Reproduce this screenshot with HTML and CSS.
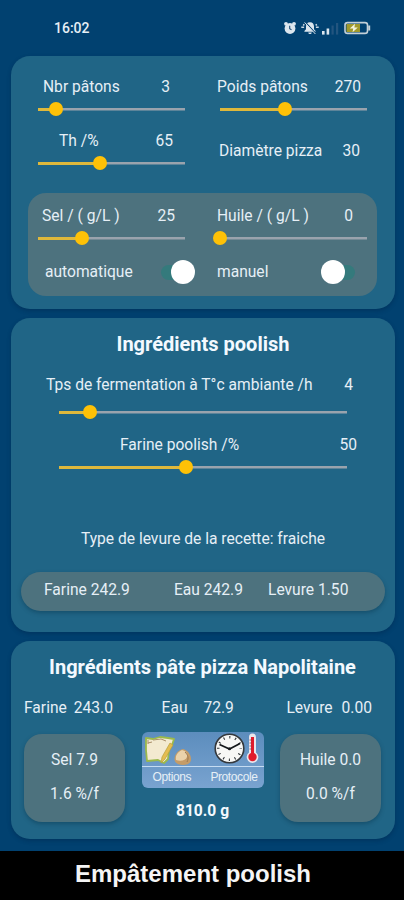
FILE: index.html
```
<!DOCTYPE html>
<html lang="fr">

<head>
    <meta charset="UTF-8">
    <meta name="viewport" content="width=device-width, initial-scale=1.0">
    <title>Empâtement poolish</title>
    <link rel="stylesheet" href="styles.css">
</head>

<body>
    <div class="status-bar">
        <span class="time">16:02</span>
        <div class="status-icons">
            <svg class="icon-alarm" width="14" height="14" viewBox="0 0 14 14">
                <circle cx="3" cy="2.8" r="1.9" fill="#dce6ee" />
                <circle cx="11" cy="2.8" r="1.9" fill="#dce6ee" />
                <circle cx="7" cy="7.5" r="5.4" fill="#dce6ee" />
                <path d="M6.7 4.8v3l1.8 1" fill="none" stroke="#1d4d77" stroke-width="1.1" />
            </svg>
            <svg class="icon-mute" width="18" height="14" viewBox="0 0 18 14">
                <path d="M9 1.2c-2.8 0-4 2-4 4.3v2.7L3.4 10v.8h11.2V10L13 8.2V5.5c0-2.3-1.2-4.3-4-4.3zM7.3 11.4h3.4c0 2.1-3.4 2.1-3.4 0z" fill="#dce6ee" />
                <path d="M5.2 2.2l9 9.800" stroke="#04406f" stroke-width="1.200" />
                <path d="M3.600 1.400l10.800 11.600" stroke="#dce6ee" stroke-width="1" />
                <path d="M.3 6.300h2.800M14.900 6.300h2.800M2 3.500l1.400.8M16 3.500l-1.400.8" stroke="#c8d6e2" stroke-width="1.600" />
            </svg>
            <svg class="icon-signal" width="17" height="13" viewBox="0 0 17 13">
                <rect x="0" y="9" width="2.6" height="3.6" fill="#dce6ee" />
                <rect x="4.6" y="6.5" width="2.6" height="6.1" fill="#dce6ee" />
                <rect x="9.5" y="3.5" width="2.2" height="9.1" fill="#23557f" />
                <rect x="14" y="1" width="2.2" height="11.6" fill="#23557f" />
            </svg>
            <svg class="icon-battery" width="27" height="14" viewBox="0 0 27 14">
                <rect x="1" y="1.6" width="22.5" height="10.8" rx="2.5" fill="none" stroke="#c3d0d8" stroke-width="1.6" />
                <path d="M25.200 4.500v5" stroke="#c3d0d8" stroke-width="2" />
                <rect x="2.5" y="3" width="13.5" height="8" fill="#a09a2c" />
                <path d="M11 2.800L5.800 7.500h3.400L8.600 11.300l5.200-4.900h-3.400z" fill="#f3f3df" />
            </svg>
        </div>
    </div>

    <div class="panel panel-settings">
        <div class="columns">
            <div class="col">
                <div class="row row-patons"><span>Nbr pâtons</span><span>3</span></div>
                <div class="slider"><div class="fill" style="width: 12.2%"></div></div>
                <div class="row row-th"><span>Th /%</span><span>65</span></div>
                <div class="slider"><div class="fill" style="width: 42%"></div></div>
            </div>
            <div class="col">
                <div class="row row-poids"><span>Poids pâtons</span><span>270</span></div>
                <div class="slider"><div class="fill" style="width: 44%"></div></div>
                <div class="row row-diametre"><span>Diamètre pizza</span><span>30</span></div>
            </div>
        </div>
        <div class="box box-settings columns">
            <div class="col">
                <div class="row row-sel"><span>Sel / ( g/L )</span><span>25</span></div>
                <div class="slider"><div class="fill" style="width: 30%"></div></div>
                <div class="row row-auto"><span>automatique</span><div class="switch on"></div></div>
            </div>
            <div class="col">
                <div class="row row-huile"><span>Huile / ( g/L )</span><span>0</span></div>
                <div class="slider"><div class="fill" style="width: 0%"></div></div>
                <div class="row row-manuel"><span>manuel</span><div class="switch"></div></div>
            </div>
        </div>
    </div>

    <div class="panel panel-poolish">
        <h2>Ingrédients poolish</h2>
        <div class="row row-temps"><span>Tps de fermentation à T°c ambiante /h</span><span>4</span></div>
        <div class="slider"><div class="fill" style="width: 10.9%"></div></div>
        <div class="row row-pct"><span>Farine poolish /%</span><span>50</span></div>
        <div class="slider"><div class="fill" style="width: 44%"></div></div>
        <p class="levure-type">Type de levure de la recette: fraiche</p>
        <div class="box box-poolish">
            <span class="farine">Farine 242.9</span>
            <span class="eau">Eau 242.9</span>
            <span class="levure">Levure 1.50</span>
        </div>
    </div>

    <div class="panel panel-pate">
        <h2>Ingrédients pâte pizza Napolitaine</h2>
        <div class="totals">
            <div class="total total-farine"><span>Farine</span><span>243.0</span></div>
            <div class="total total-eau"><span>Eau</span><span>72.9</span></div>
            <div class="total total-levure"><span>Levure</span><span>0.00</span></div>
        </div>
        <div class="bottom">
            <div class="box box-small"><span>Sel 7.9</span><span>1.6 %/f</span></div>
            <div class="center">
                <div class="actions">
                    <div class="action-icons">
                        <svg width="122" height="34" viewBox="0 0 122 34">
                            <!-- papier et crayon -->
                            <path d="M4 6l7 1 7-2 8 1 6 1-2 6-3 4-1 10-4 4-6-3-11 1-1-11z" fill="#f3ead0" stroke="#9bb94b" stroke-width="1.8" stroke-linejoin="round" />
                            <path d="M6 11l4-1M6 8v4M11 8l8-1 5 2" fill="none" stroke="#a98e68" stroke-width="1" />
                            <path d="M28 11l3 2-8 14-4 4 1-6z" fill="#e5bd50" stroke="#b7a13c" stroke-width=".7" />
                            <!-- pâton -->
                            <path d="M41 17c4 1 8 5 8 10 0 4-3 6-8 6s-8.500-2-8.500-6c0-5 4-9 8.500-10z" fill="#c49c68" />
                            <path d="M40 18c4 1 6 4 5 7s-6 5-11 3c-1-5 2-8 6-10z" fill="#ead2aa" />
                            <path d="M43 20c3 3 4 6 2 10" fill="none" stroke="#9b7851" stroke-width="1" />
                            <!-- horloge -->
                            <circle cx="87.5" cy="16.5" r="14.3" fill="#f7f7f5" stroke="#34383c" stroke-width="1.6" />
                            <circle cx="87.5" cy="16.5" r="11.3" fill="none" stroke="#33373b" stroke-width="2.6" stroke-dasharray="1.1 4.817" stroke-dashoffset=".55" />
                            <path d="M77.500 12.500l10 4.500 10.500-5.500" fill="none" stroke="#15181b" stroke-width="1.7" />
                            <circle cx="87.5" cy="16.7" r="1.5" fill="#15181b" />
                            <!-- thermomètre -->
                            <path d="M107 5a3.500 3.500 0 0 1 7 0v15.500a5.800 5.800 0 1 1-7 0z" fill="#e9e6ec" />
                            <path d="M110.500 5v20" stroke="#e01c2c" stroke-width="3" />
                            <circle cx="110.5" cy="25" r="4.2" fill="#e01c2c" />
                            <path d="M107.500 8h2M107.500 11h2M107.500 14h2M107.500 17h2" stroke="#84313e" stroke-width=".7" />
                        </svg>
                    </div>
                    <div class="action-labels"><span>Options</span><span>Protocole</span></div>
                </div>
                <div class="weight">810.0 g</div>
            </div>
            <div class="box box-small"><span>Huile 0.0</span><span>0.0 %/f</span></div>
        </div>
    </div>

    <div class="footer">Empâtement poolish</div>
</body>

</html>
```
FILE: styles.css
```
* {
    padding: 0px;
    margin: 0px;
    box-sizing: border-box;
}
body {
    width: 404px;
    height: 900px;
    overflow: hidden;
    background-color: #014170;
    color: #e6eff6;
    font-family: Roboto, sans-serif;
    font-size: 15.6px;
    line-height: 20px;
    white-space: nowrap;
}

.status-bar {
    height: 56px;
    padding: 18px 33px 0 54px;
    display: flex;
    justify-content: space-between;
}
.time {
    font-weight: 500;
    font-size: 14px;
}
.status-icons {
    display: flex;
    align-items: center;
    height: 20px;
}
.icon-mute {
    margin-left: 4px;
}
.icon-signal {
    margin-left: 3px;
}
.icon-battery {
    margin-left: 5px;
}

.panel {
    width: 384px;
    margin: 0 0 9px 11px;
    border-radius: 19px;
    background-color: #206586;
    box-shadow: 0 2px 4px rgba(0, 25, 60, 0.3);
}
.box {
    background-color: #4d727e;
    box-shadow: 0 2px 4px rgba(0, 40, 60, 0.35);
}
h2 {
    font-size: 20px;
    line-height: 26px;
    font-weight: 700;
    text-align: center;
    color: #f3f9ff;
}

.columns {
    display: flex;
    gap: 35px;
}
.col {
    width: 147px;
}
.row {
    display: flex;
    justify-content: space-between;
    align-items: center;
    height: 20px;
}
.slider {
    display: flex;
    align-items: center;
    height: 14px;
    background: linear-gradient(#9aa3ad, #9aa3ad) center / 100% 2.5px no-repeat;
}
.fill {
    position: relative;
    height: 3px;
    background-color: #dfb83b;
}
.fill::after {
    content: "";
    position: absolute;
    right: -7px;
    top: -5.5px;
    width: 14px;
    height: 14px;
    border-radius: 50%;
    background-color: #fec107;
}

/* réglages */
.panel-settings {
    height: 253px;
    padding: 21px 0 0 17px;
}
.panel-settings > .columns:first-child {
    height: 116px;
    padding-left: 10px;
}
.row-patons {
    padding: 0 15px 0 5px;
}
.row-poids {
    margin-left: -3px;
    padding-right: 6px;
}
.row-poids + .slider,
.row-patons + .slider,
.row-sel + .slider,
.row-huile + .slider {
    margin-top: 5px;
}
.row-th {
    margin-top: 15px;
    padding: 0 12px 0 21px;
}
.row-th + .slider {
    margin-top: 5px;
}
.row-diametre {
    margin: 25px 0 0 -1px;
    padding-right: 7px;
}
.box-settings {
    width: 349px;
    height: 103px;
    padding: 13px 0 0 10px;
    border-radius: 18px;
    box-shadow: none;
}
.row-sel {
    padding: 0 10px 0 4px;
}
.row-huile {
    margin-left: -3px;
    padding-right: 14px;
}
.row-auto,
.row-manuel {
    margin-top: 15px;
    height: 24px;
}
.row-auto {
    padding-left: 7px;
    margin-right: -10px;
}
.row-manuel {
    margin-left: -3px;
    padding-right: 12px;
}
.switch {
    display: flex;
    align-items: center;
    width: 34px;
    height: 15px;
    border-radius: 8px;
    background-color: #347a7c;
}
.switch::before {
    content: "";
    width: 24px;
    height: 24px;
    flex-shrink: 0;
    border-radius: 50%;
    background-color: #fff;
}
.switch.on {
    justify-content: flex-end;
}

/* poolish */
.panel-poolish {
    height: 314px;
    padding: 13px 10px 0;
}
.panel-poolish .slider {
    width: 288px;
    margin-left: 38px;
}
.row-temps {
    margin-top: 18px;
    padding: 0 32px 0 25px;
}
.row-temps + .slider {
    margin-top: 10px;
}
.row-pct {
    margin-top: 16px;
    padding: 0 28px 0 99px;
}
.row-pct + .slider {
    margin-top: 5px;
}
.levure-type {
    margin-top: 55px;
    text-align: center;
}
.box-poolish {
    display: flex;
    height: 39px;
    margin-top: 23px;
    padding: 8px 0 0 23px;
    border-radius: 20px;
}
.farine {
    width: 130px;
}
.eau {
    width: 94px;
}

/* pâte */
.panel-pate {
    height: 198px;
    padding: 13px 14px 0 13px;
}
.totals {
    display: flex;
    justify-content: space-between;
    margin-top: 18px;
    padding: 0 9px 0 0;
}
.total {
    display: flex;
    gap: 7px;
}
.total-eau {
    gap: 16px;
    margin-left: -4px;
}
.total-levure {
    gap: 9px;
}
.bottom {
    display: flex;
    justify-content: space-between;
    margin-top: 14px;
}
.box-small {
    display: flex;
    flex-direction: column;
    align-items: center;
    gap: 14px;
    width: 101px;
    height: 88px;
    margin-top: 2px;
    padding-top: 16px;
    border-radius: 18px;
}
.actions {
    width: 122px;
    height: 56px;
    border-radius: 6px;
    overflow: hidden;
    background: linear-gradient(#5c8dbd, #79a3d0);
}
.action-icons {
    height: 35px;
    border-bottom: 1px solid #c5dcf2;
}
.action-icons svg {
    display: block;
}
.action-labels {
    display: flex;
    justify-content: space-between;
    padding: 0 6px 0 11px;
    font-family: "Liberation Sans", Arial, sans-serif;
    font-size: 12px;
    letter-spacing: -0.4px;
}
.weight {
    margin-top: 13px;
    font-weight: 700;
    text-align: center;
    color: #f3f9ff;
}

.footer {
    height: 49px;
    margin-top: 12px;
    padding: 9px 0 0 75px;
    background-color: #000;
    color: #f5f5f5;
    font: bold 24px/28px "Liberation Sans", Arial, sans-serif;
}
```
